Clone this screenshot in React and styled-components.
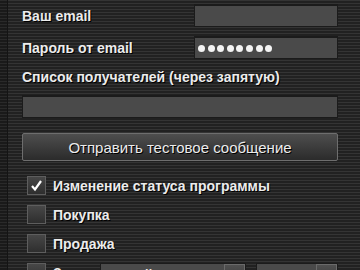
import React from 'react';
import styled, { createGlobalStyle } from 'styled-components';

const GlobalStyle = createGlobalStyle`
  html, body {
    margin: 0;
    padding: 0;
    background: #222;
    overflow: hidden;
  }
`;

const Screen = styled.div`
  width: 360px;
  height: 270px;
  overflow: hidden;
  display: flex;
  align-items: flex-start;
  font-family: "Liberation Sans", Arial, sans-serif;
  background: repeating-linear-gradient(
    to bottom,
    #343434 0px,
    #343434 1px,
    #212121 1px,
    #212121 3px
  );
`;

const EdgeStrip = styled.div`
  width: 7px;
  height: 270px;
  flex: none;
  border-right: 1px solid #141414;
  background: repeating-linear-gradient(
    to bottom,
    #2a2a2a 0px,
    #2a2a2a 1px,
    #1a1a1a 1px,
    #1a1a1a 3px
  );
`;

const Panel = styled.div`
  flex: none;
  padding: 4px 0 0 14px;
  width: 316px;
  display: flex;
  flex-direction: column;

  & > * {
    flex-shrink: 0;
  }
`;

const Label = styled.div`
  color: #ececec;
  font-size: 14px;
  font-weight: bold;
  text-shadow: 1px 1px 0 #000;
  white-space: nowrap;
  min-width: ${p => p.w || 0}px;
`;

const FieldRow = styled.div`
  display: grid;
  grid-template-columns: 1fr 144px;
  align-items: center;
  width: 316px;
  height: 23px;
  margin-bottom: ${p => p.gap || 0}px;
`;

const Input = styled.div`
  box-sizing: border-box;
  height: 23px;
  width: ${p => p.w || '100%'};
  background: #4a4a4a;
  border: 1px solid #1b1b1b;
  border-top: 2px solid #1b1b1b;
  display: flex;
  align-items: center;
  padding-left: 3px;
  gap: 2.6px;
`;

const Dot = styled.span`
  width: 7px;
  height: 7px;
  border-radius: 50%;
  background: #f4f4f4;
`;

const ListLabel = styled(Label)`
  margin: 10px 0 10px;
  line-height: 16px;
`;

const Button = styled.button`
  box-sizing: border-box;
  margin-top: 15px;
  width: 316px;
  height: 28px;
  border: 1px solid #6e6e6e;
  border-radius: 2px;
  background: linear-gradient(to bottom, #4e4e4e, #2b2b2b);
  color: #ececec;
  font-family: "Liberation Sans", Arial, sans-serif;
  font-size: 15px;
  text-shadow: 1px 1px 0 #000;
  padding: 0;
`;

const CheckList = styled.div`
  margin-top: 15px;
  display: flex;
  flex-direction: column;
  gap: 10px;
`;

const CheckRow = styled.div`
  display: flex;
  align-items: center;
  height: 19px;
  padding-left: 5px;
  gap: 7px;
`;

const Box = styled.span`
  box-sizing: border-box;
  width: 19px;
  height: 19px;
  flex: none;
  border: 1px solid #5e5e5e;
  background: linear-gradient(to bottom, #474747, #2e2e2e);
  display: flex;
  align-items: center;
  justify-content: center;
`;

const Select = styled.div`
  box-sizing: border-box;
  flex: none;
  height: 23px;
  width: ${p => p.w}px;
  margin-left: ${p => p.ml || 0}px;
  margin-top: 4px;
  background: #4a4a4a;
  border: 1px solid #1b1b1b;
  display: flex;
  align-items: center;
  justify-content: space-between;
  color: #ececec;
  font-size: 14px;
  font-weight: bold;
  padding-left: 4px;
  white-space: nowrap;
  overflow: hidden;
`;

const SelectButton = styled.span`
  box-sizing: border-box;
  flex: none;
  width: 21px;
  height: 21px;
  border: 1px solid #6a6a6a;
  background: linear-gradient(to bottom, #505050, #353535);
`;

const Check = () => (
  <svg width="13" height="13" viewBox="0 0 13 13">
    <path d="M2 7 L5 10.5 L11 2" fill="none" stroke="#fff" strokeWidth="2.2" />
  </svg>
);

const CheckItem = ({ checked, children }) => (
  <CheckRow>
    <Box>{checked && <Check />}</Box>
    <Label>{children}</Label>
  </CheckRow>
);

export default function App() {
  return (
    <>
      <GlobalStyle />
      <Screen>
        <EdgeStrip />
        <Panel>
          <FieldRow gap={9}>
            <Label>Ваш email</Label>
            <Input />
          </FieldRow>
          <FieldRow>
            <Label>Пароль от email</Label>
            <Input>
              {Array.from({ length: 8 }).map((_, i) => <Dot key={i} />)}
            </Input>
          </FieldRow>
          <ListLabel>Список получателей (через запятую)</ListLabel>
          <Input w="316px" />
          <Button>Отправить тестовое сообщение</Button>
          <CheckList>
            <CheckItem checked>Изменение статуса программы</CheckItem>
            <CheckItem>Покупка</CheckItem>
            <CheckItem>Продажа</CheckItem>
            <CheckRow>
              <Box />
              <Label w={40}>Звук:</Label>
              <Select w={146}>
                Новый сигнал
                <SelectButton />
              </Select>
              <Select w={82} ml={3}>
                00:00
                <SelectButton />
              </Select>
            </CheckRow>
          </CheckList>
        </Panel>
      </Screen>
    </>
  );
}
